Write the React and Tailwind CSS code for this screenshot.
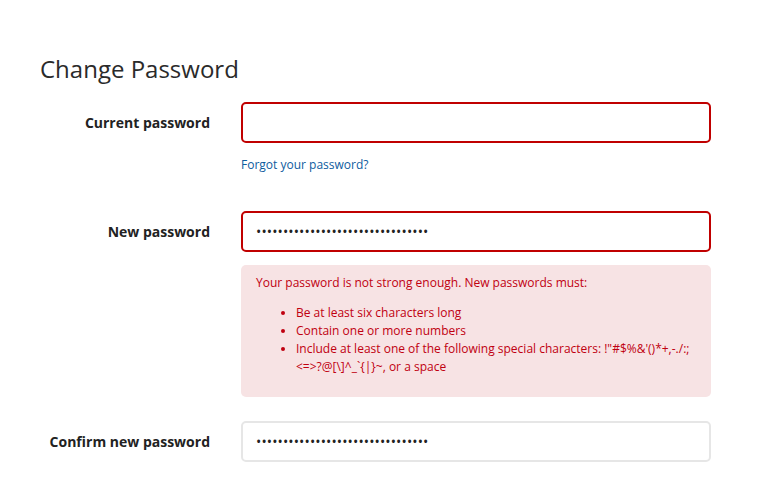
export default function App() {
  const dots = "abcdefghijklmnopqrstuvwxyz123456";
  const specials = "Include at least one of the following special characters: !\"#$%&'()*+,-./:; <=>?@[\\]^_`{|}~, or a space";

  return (
    <div className="min-h-screen bg-white font-['Open_Sans',sans-serif] text-[#222]">
      <main className="pl-10 pr-[57px] pt-[52px]">
        <h1 className="text-[24px] leading-[34px] text-[#2a2a2a] mb-[16px]">Change Password</h1>

        <div className="grid grid-cols-[170px_1fr] gap-x-[31px]">
          {/* current */}
          <label className="flex h-[41px] items-center justify-end text-[14px] font-bold text-[#222]">
            Current password
          </label>
          <div>
            <input
              type="password"
              className="block h-[41px] w-full rounded-[5px] border-2 border-[#c00000] px-[13px] text-[14px] outline-none"
            />
            <a href="#" className="mt-[13px] block text-[12px] leading-[17px] text-[#0e5c9e]">
              Forgot your password?
            </a>
          </div>

          {/* new */}
          <label className="mt-[38px] flex h-[41px] items-center justify-end text-[14px] font-bold text-[#222]">
            New password
          </label>
          <div className="mt-[38px]">
            <input
              type="password"
              readOnly
              defaultValue={dots}
              className="block h-[41px] w-full rounded-[5px] border-2 border-[#c00000] px-[13px] text-[14px] tracking-[0.125px] outline-none"
            />
            <div className="mt-[13px] rounded-[5px] bg-[#f7e3e4] px-[15px] pt-[9px] pb-[21px] text-[12px] leading-[18px] text-[#c00010]">
              <p>Your password is not strong enough. New passwords must:</p>
              <ul className="mt-[12px] list-disc pl-[40px]">
                <li>Be at least six characters long</li>
                <li>Contain one or more numbers</li>
                <li>{specials}</li>
              </ul>
            </div>
          </div>

          {/* confirm */}
          <label className="mt-[24px] flex h-[41px] items-center justify-end text-[14px] font-bold text-[#222]">
            Confirm new password
          </label>
          <div className="mt-[24px]">
            <input
              type="password"
              readOnly
              defaultValue={dots}
              className="block h-[41px] w-full rounded-[5px] border-2 border-[#e6e6e6] px-[13px] text-[14px] tracking-[0.125px] outline-none"
            />
          </div>
        </div>
      </main>
    </div>
  );
}
